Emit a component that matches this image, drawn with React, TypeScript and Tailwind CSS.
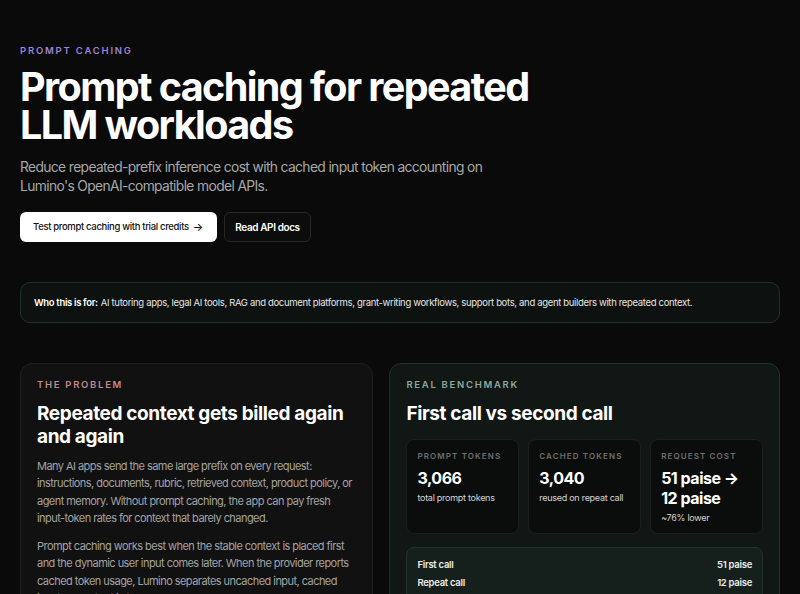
import React from 'react';

const STATS = [
  { label: 'Prompt tokens', value: '3,066', note: 'total prompt tokens' },
  { label: 'Cached tokens', value: '3,040', note: 'reused on repeat call' },
  { label: 'Request cost', value: '51 paise → 12 paise', note: '~76% lower' },
];

const ROWS = [
  { label: 'First call', value: '51 paise' },
  { label: 'Repeat call', value: '12 paise' },
];

export default function App() {
  return (
    <div
      className="min-h-[594px] w-full bg-[#0a0a0a] text-white px-5 pt-[44px] pb-10"
      style={{ fontFamily: 'Inter, "Noto Sans", sans-serif' }}
    >
      {/* Hero */}
      <div className="text-[9.5px] font-semibold uppercase tracking-[0.19em] text-[#9a84db]">Prompt caching</div>
      <h1 className="mt-[10px] text-[39.5px] font-bold leading-[38px] tracking-[-0.04em] text-white">
        Prompt caching for repeated
        <br />
        LLM workloads
      </h1>
      <p className="mt-[14px] text-[13.8px] leading-[18.5px] tracking-[-0.045em] text-[#a8a8a8] max-w-[480px]">
        Reduce repeated-prefix inference cost with cached input token accounting on Lumino's OpenAI-compatible model
        APIs.
      </p>
      <div className="mt-[17px] flex items-center gap-[7px]">
        <button className="h-[30px] w-[197px] pl-[13px] pr-[14px] rounded-[6px] bg-white text-[#111] text-[9.5px] tracking-[-0.035em] font-medium whitespace-nowrap flex items-center justify-between">
          <span>Test prompt caching with trial credits</span>
          <span className="text-[11px]">→</span>
        </button>
        <button className="h-[30px] w-[87px] rounded-[6px] border border-[#262626] bg-[#0c0c0c] text-[10px] tracking-[-0.04em] font-semibold text-white whitespace-nowrap">
          Read API docs
        </button>
      </div>

      {/* Audience */}
      <div className="mt-[40px] h-[41px] rounded-[10px] border border-[#1d3129] bg-[#0d1210] px-[13px] flex items-center text-[9.5px] tracking-[-0.035em] text-[#e5e5e5]">
        <span className="font-semibold text-white mr-[3px]">Who this is for:</span>
        AI tutoring apps, legal AI tools, RAG and document platforms, grant-writing workflows, support bots, and agent
        builders with repeated context.
      </div>

      {/* Cards */}
      <div className="mt-[40px] grid grid-cols-[0.905fr_1fr] gap-4 items-start">
        <div className="rounded-[12px] border border-[#1f1f1f] bg-[#111111] px-4 pt-[14px] pb-5">
          <div className="text-[9.5px] font-semibold uppercase tracking-[0.18em] text-[#c08a8e]">The problem</div>
          <h2 className="mt-[9px] text-[19px] font-bold leading-[23px] tracking-[-0.02em] text-white">
            Repeated context gets billed again and again
          </h2>
          <p className="mt-[10px] text-[11px] leading-[17.5px] tracking-[-0.05em] text-[#a3a3a3]">
            Many AI apps send the same large prefix on every request: instructions, documents, rubric, retrieved
            context, product policy, or agent memory. Without prompt caching, the app can pay fresh input-token rates
            for context that barely changed.
          </p>
          <p className="mt-[10px] text-[11px] leading-[17.5px] tracking-[-0.05em] text-[#a3a3a3]">
            Prompt caching works best when the stable context is placed first and the dynamic user input comes later.
            When the provider reports cached token usage, Lumino separates uncached input, cached input and output in
            the usage record.
          </p>
        </div>

        <div className="rounded-[12px] border border-[#1e332b] bg-[#101715] px-4 pt-[14px] pb-5">
          <div className="text-[9.5px] font-semibold uppercase tracking-[0.18em] text-[#8fa99b]">Real benchmark</div>
          <h2 className="mt-[9px] text-[19px] font-bold leading-[23px] tracking-[-0.02em] text-white">
            First call vs second call
          </h2>
          <div className="mt-[14px] grid grid-cols-3 gap-[9px]">
            {STATS.map((s) => (
              <div key={s.label} className="h-[95px] rounded-[8px] border border-[#1a201d] bg-[#0b0d0c] px-[10px] pt-[10px]">
                <div className="text-[8px] font-semibold uppercase tracking-[0.14em] text-[#6e6e6e]">{s.label}</div>
                <div className="mt-[6px] text-[16px] font-bold leading-[20px] tracking-[-0.03em] text-white">{s.value}</div>
                <div className="mt-[3px] text-[9px] tracking-[-0.03em] text-[#d4d4d4]">{s.note}</div>
              </div>
            ))}
          </div>
          <div className="mt-[13px] rounded-[8px] border border-[#22332c] bg-[#15201c] px-[10px] pt-[10px] pb-[10px] flex flex-col gap-[4px]">
            {ROWS.map((r) => (
              <div
                key={r.label}
                className="flex items-center justify-between text-[9.5px] leading-[14px] tracking-[-0.03em] font-semibold text-[#ededed]"
              >
                <span>{r.label}</span>
                <span>{r.value}</span>
              </div>
            ))}
          </div>
        </div>
      </div>
    </div>
  );
}
